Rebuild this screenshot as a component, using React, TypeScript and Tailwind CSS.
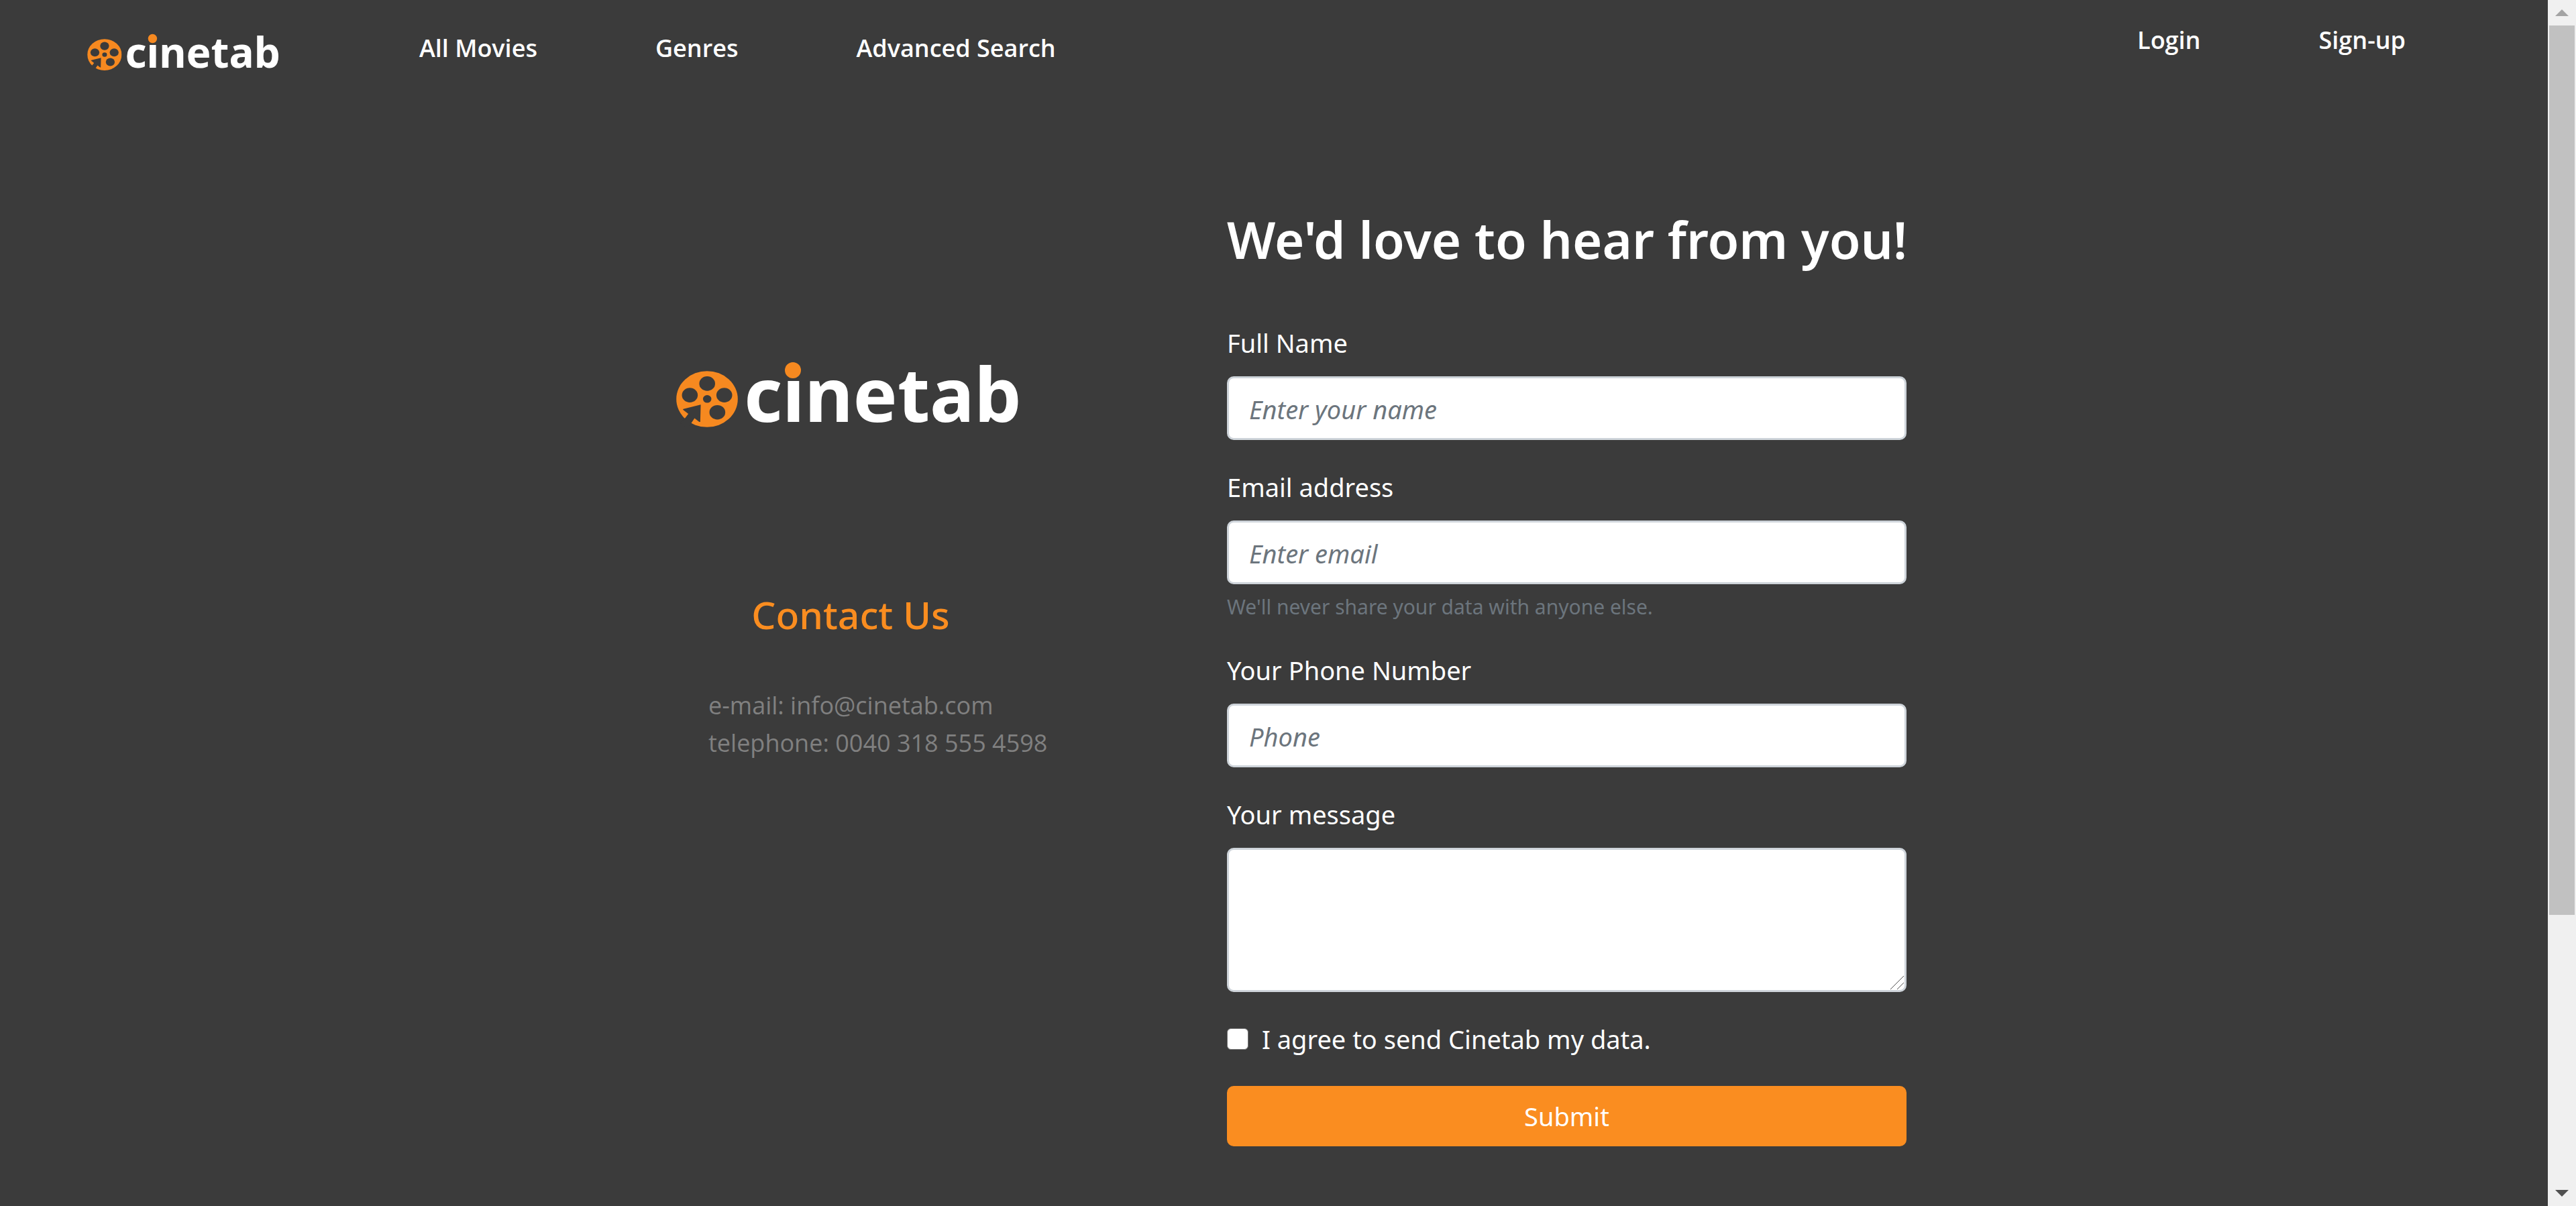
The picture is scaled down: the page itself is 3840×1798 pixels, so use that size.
import React from "react";

function Logo({ className }: { className: string }) {
  return (
    <svg viewBox="0 -30 520 152" className={className} role="img" aria-label="cinetab">
      <svg x="0" y="13" width="92" height="84" viewBox="0 0 249 249" preserveAspectRatio="none">
        <circle cx="124.500" cy="124.500" r="124" fill="#f68920" />
        <g fill="#3b3b3b">
          <circle cx="125" cy="56" r="32" />
          <circle cx="55" cy="107" r="32" />
          <circle cx="194" cy="107" r="32" />
          <circle cx="166" cy="183" r="32" />
          <circle cx="125" cy="124" r="17" />
          <path d="M99 149 L97 225 L93 225 L74 209 L60 232 L40 252 L14 230 L36 208 L49 190 L27 171 L29 168 Z" />
        </g>
      </svg>
      <text x="101" y="89" fill="#ffffff" fontSize="111" fontWeight="700" fontFamily="'Noto Sans', sans-serif">
        cinetab
      </text>
      <circle cx="174" cy="12" r="12" fill="#f68920" />
    </svg>
  );
}

const field =
  "block w-full rounded-[10px] border-[3px] border-[#ced4da] bg-white px-[30px] text-[38px] text-[#495057] placeholder:italic placeholder:text-[#6c757d] placeholder:opacity-100";

function Field({ id, label, type, placeholder, hint }: {
  id: string;
  label: string;
  type: string;
  placeholder: string;
  hint?: string;
}) {
  return (
    <div className="mb-10">
      <label htmlFor={id} className="mb-5 block leading-[60px]">{label}</label>
      <input id={id} type={type} placeholder={placeholder} className={`${field} h-[95px] pt-[2px]`} />
      {hint && <small className="mt-[10px] block text-[30px] leading-[48px] text-[#6c757d]">{hint}</small>}
    </div>
  );
}

function Scrollbar() {
  return (
    <div className="flex h-screen w-[42px] shrink-0 flex-col bg-[#f0f0f0]" aria-hidden="true">
      <div className="flex h-[38px] items-center justify-center">
        <svg width="20" height="10" viewBox="0 0 20 10"><path d="M10 0 L20 10 H0 Z" fill="#a3a3a3" /></svg>
      </div>
      <div className="flex-1 px-[2px]">
        <div className="h-[77%] bg-[#c1c1c1]" />
      </div>
      <div className="flex h-[38px] items-center justify-center">
        <svg width="20" height="10" viewBox="0 0 20 10"><path d="M0 0 H20 L10 10 Z" fill="#505050" /></svg>
      </div>
    </div>
  );
}

export default function App() {
  return (
    <div className="flex h-screen overflow-hidden bg-[#3b3b3b] font-['Noto_Sans',sans-serif] text-[38px] text-white">
      <div className="min-w-0 flex-1">
        <header className="flex items-start justify-between pr-[212px] pl-[130px] font-['Open_Sans',sans-serif] text-[36px] leading-[54px] font-semibold">
          <div className="flex items-start">
            <a href="#home" className="mt-[34px]"><Logo className="h-[85px] w-[291px]" /></a>
            <nav className="mt-[45px] ml-[204px] flex gap-[176px]">
              <a href="#movies">All Movies</a>
              <a href="#genres">Genres</a>
              <a href="#search">Advanced Search</a>
            </nav>
          </div>
          <nav className="mt-[33px] flex gap-[176px]">
            <a href="#login">Login</a>
            <a href="#signup">Sign-up</a>
          </nav>
        </header>

        <main className="mx-auto mt-[186px] flex w-[1886px] max-w-full items-start justify-between">
          <section className="flex w-[624px] flex-col items-center pt-[205px]">
            <Logo className="h-[152px] w-[520px]" />
            <h2 className="mt-[218px] text-[57px] leading-[72px] font-medium text-[#fa8d20]">Contact Us</h2>
            <address className="mt-[72px] w-full pl-[100px] font-['Open_Sans',sans-serif] text-[36px] leading-[56px] whitespace-nowrap text-[#808080] not-italic">
              <p>e-mail: info@cinetab.com</p>
              <p>telephone: 0040 318 555 4598</p>
            </address>
          </section>

          <form className="w-[1013px]" onSubmit={(e: React.FormEvent) => e.preventDefault()}>
            <h1 className="mb-[76px] pt-1 text-[76px] leading-[96px] font-semibold whitespace-nowrap">We'd love to hear from you!</h1>
            <Field id="name" label="Full Name" type="text" placeholder="Enter your name" />
            <Field id="email" label="Email address" type="email" placeholder="Enter email" hint="We'll never share your data with anyone else." />
            <Field id="phone" label="Your Phone Number" type="tel" placeholder="Phone" />
            <label htmlFor="message" className="mb-5 block leading-[60px]">Your message</label>
            <div className="relative">
              <textarea id="message" className={`${field} h-[215px] resize-none py-4`} />
              <svg className="pointer-events-none absolute right-1 bottom-1" width="20" height="20" viewBox="0 0 20 20" aria-hidden="true">
                <path d="M0 20 L20 0 M10 20 L20 10" stroke="#555555" strokeWidth="1" fill="none" />
              </svg>
            </div>
            <div className="my-10 flex items-center gap-5 leading-[60px]">
              <input id="agree" type="checkbox" className="size-8 appearance-none rounded-[6px] border border-[#767676] bg-white checked:bg-[#fa8d20]" />
              <label htmlFor="agree">I agree to send Cinetab my data.</label>
            </div>
            <button type="submit" className="h-[90px] w-full rounded-[10px] bg-[#fa8d20] text-center">Submit</button>
          </form>
        </main>
      </div>
      <Scrollbar />
    </div>
  );
}
